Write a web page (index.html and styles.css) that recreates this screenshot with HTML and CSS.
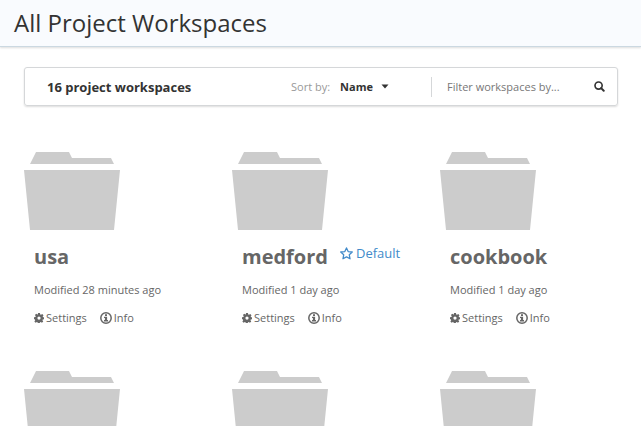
FILE: index.html
```html
<!DOCTYPE html>
<html lang="en">
<head>
<meta charset="utf-8">
<title>All Project Workspaces</title>
<link rel="stylesheet" href="styles.css">
</head>
<body>
<svg class="symbols" aria-hidden="true">
  <symbol id="folder" viewBox="0 0 96 78">
    <path d="M6 12 12 0H45L48 6H87L90 12ZM0 18H96L90 78H6Z"/>
  </symbol>
  <symbol id="gear" viewBox="0 0 16 16">
    <path fill-rule="evenodd" d="M6.5 0h3l.5 2.3 1.2.5 2-1.3 2 2-1.3 2 .5 1.2 1.6.2v3l-2 .5-.5 1.2 1.3 1.9-2.1 2-1.9-1.3-1.2.5-.4 2.2h-3l-.5-2.2-1.1-.5-2 1.3-2-2 1.3-2-.5-1.1L0 9.7v-3l2.3-.5.5-1.1-1.3-2 2-2 2 1.3L6 2.3ZM8 5.4a2.6 2.6 0 1 0 0 5.2 2.6 2.6 0 0 0 0-5.2Z"/>
  </symbol>
  <symbol id="info" viewBox="0 0 12 12">
    <circle cx="6" cy="6" r="5.2" fill="none" stroke="currentColor" stroke-width="1.5"/>
    <path d="M5 2.3h2v1.7H5ZM4 4.7H7.1v3.3H8v1.4H4V8h.9V6H4Z"/>
  </symbol>
  <symbol id="star" viewBox="0 0 14 14">
    <path d="m7 1 1.8 3.9 4.4.5-3.2 3 .8 4.3L7 10.6l-3.8 2.1.8-4.3-3.2-3 4.4-.5Z" fill="none" stroke="currentColor" stroke-width="1.4" stroke-linejoin="round"/>
  </symbol>
  <symbol id="search" viewBox="0 0 12 12">
    <path d="M7.8 7.8 10.6 10.6" stroke="currentColor" stroke-width="2.2" stroke-linecap="round"/>
    <circle cx="5" cy="5" r="3.9" fill="none" stroke="currentColor" stroke-width="1.8"/>
  </symbol>
</svg>
<header class="header"><h1>All Project Workspaces</h1></header>
<main class="main">
  <section class="toolbar">
    <h2 class="count">16 project workspaces</h2>
    <div class="sort">
      <label for="sort">Sort by:</label>
      <span class="picker">
        <select id="sort"><option>Name</option></select>
        <svg class="caret" viewBox="0 0 8 5" aria-hidden="true"><path d="M.5.5h7L4 4.5Z"/></svg>
      </span>
    </div>
    <form class="filter">
      <input type="text" placeholder="Filter workspaces by..." aria-label="Filter workspaces">
      <button type="button" aria-label="Search"><svg><use href="#search"/></svg></button>
    </form>
  </section>
  <section class="grid">
    <article class="card">
      <svg class="folder"><use href="#folder"/></svg>
      <div class="details">
        <div class="title"><h3>usa</h3></div>
        <p>Modified 28 minutes ago</p>
        <nav class="actions">
          <a href="#"><svg class="gear"><use href="#gear"/></svg>Settings</a>
          <a href="#"><svg class="info"><use href="#info"/></svg>Info</a>
        </nav>
      </div>
    </article>
    <article class="card">
      <svg class="folder"><use href="#folder"/></svg>
      <div class="details">
        <div class="title"><h3>medford</h3><a class="default" href="#"><svg><use href="#star"/></svg>Default</a></div>
        <p>Modified 1 day ago</p>
        <nav class="actions">
          <a href="#"><svg class="gear"><use href="#gear"/></svg>Settings</a>
          <a href="#"><svg class="info"><use href="#info"/></svg>Info</a>
        </nav>
      </div>
    </article>
    <article class="card">
      <svg class="folder"><use href="#folder"/></svg>
      <div class="details">
        <div class="title"><h3>cookbook</h3></div>
        <p>Modified 1 day ago</p>
        <nav class="actions">
          <a href="#"><svg class="gear"><use href="#gear"/></svg>Settings</a>
          <a href="#"><svg class="info"><use href="#info"/></svg>Info</a>
        </nav>
      </div>
    </article>
    <article class="card"><svg class="folder"><use href="#folder"/></svg></article>
    <article class="card"><svg class="folder"><use href="#folder"/></svg></article>
    <article class="card"><svg class="folder"><use href="#folder"/></svg></article>
  </section>
</main>
</body>
</html>
```
FILE: styles.css
```css
* { box-sizing: border-box; }

body {
  display: flex;
  flex-direction: column;
  height: 100vh;
  margin: 0;
  overflow: hidden;
  background: #fff;
  color: #666;
  font: 11px/16px "Open Sans", "Noto Sans", sans-serif;
}

h1, h2, h3, p { margin: 0; }
a { color: inherit; text-decoration: none; }
svg { display: block; flex: none; fill: currentColor; }
.symbols { position: absolute; width: 0; height: 0; }

.header {
  flex: none;
  padding: 7px 14px;
  background: #f9fbfe;
  border-bottom: 1px solid #cbd8e1;
  box-shadow: 0 1px 2px #ddd;
}
.header h1 {
  color: #333;
  font-size: 24px;
  font-weight: 400;
  line-height: 32px;
}

.main { padding: 20px 23px 0 24px; }

.toolbar {
  display: flex;
  align-items: center;
  height: 39px;
  padding: 0 10px 0 22px;
  border: 1px solid #d5d7d9;
  border-radius: 3px;
  box-shadow: 0 1px 2px #ddd;
}
.count {
  flex: 1;
  color: #333;
  font-size: 13px;
  font-weight: 700;
}
.sort {
  display: flex;
  align-items: center;
  gap: 10px;
  width: 140px;
  color: #999;
}
.picker { display: flex; align-items: center; gap: 8px; color: #333; }
.picker select {
  appearance: none;
  padding: 0;
  border: 0;
  background: none;
  color: inherit;
  font: inherit;
  font-weight: 700;
}
.caret { width: 8px; height: 5px; }
.filter {
  display: flex;
  align-items: center;
  width: 176px;
  height: 20px;
  padding-left: 15px;
  border-left: 1px solid #d5d7d9;
}
.filter input {
  flex: 1;
  min-width: 0;
  padding: 0;
  border: 0;
  background: none;
  color: #333;
  font: inherit;
}
.filter input::placeholder { color: #777; }
.filter button {
  padding: 2px;
  border: 0;
  background: none;
  color: #333;
}
.filter button svg { width: 11px; height: 11px; }

.grid {
  display: grid;
  grid-template-columns: repeat(3, minmax(0, 1fr));
  gap: 45px 30px;
  padding-top: 46px;
}
.folder { width: 96px; height: 78px; color: #ccc; }
.details { padding: 12px 0 0 10px; }
.title { display: flex; gap: 12px; margin-bottom: 10px; }
.title h3 {
  font-size: 20px;
  font-weight: 700;
  line-height: 30px;
}
.default {
  display: flex;
  align-items: center;
  gap: 3px;
  height: 22px;
  color: #428bca;
  font-size: 13px;
}
.default svg { width: 13px; height: 13px; }
.actions { display: flex; gap: 13px; margin-top: 12px; }
.actions a { display: flex; align-items: center; gap: 2px; }
.gear { width: 10px; height: 10px; }
.info { width: 12px; height: 12px; }
```
